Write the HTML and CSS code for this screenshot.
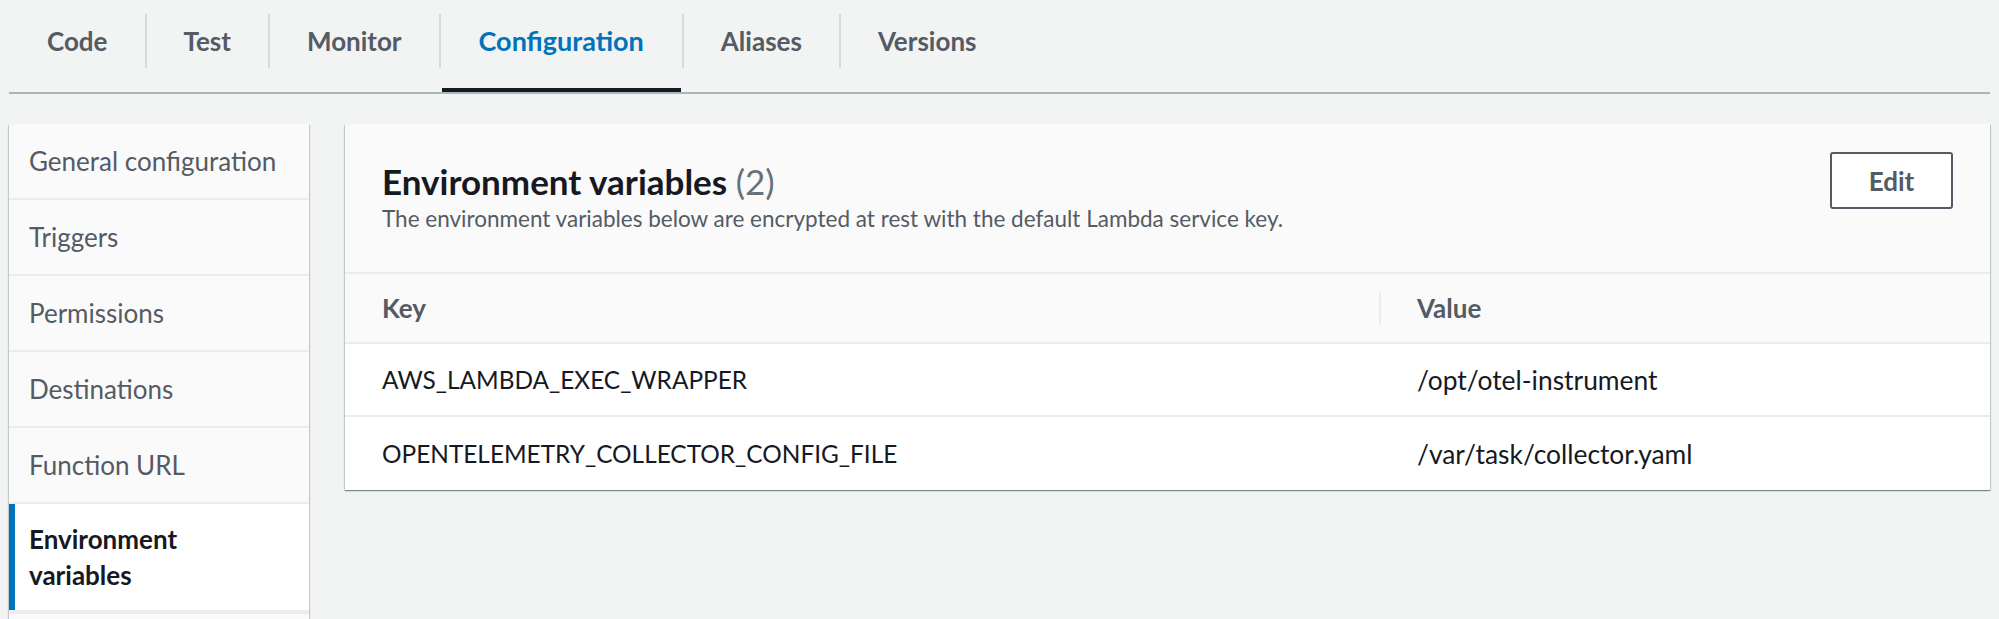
FILE: index.html
```html
<!DOCTYPE html>
<html lang="en">
<head>
<meta charset="utf-8">
<title>Lambda configuration</title>
<link rel="stylesheet" href="styles.css">
</head>
<body>
<div class="page">
  <nav class="tabs">
    <div class="tab first">Code</div>
    <div class="sep"></div>
    <div class="tab">Test</div>
    <div class="sep"></div>
    <div class="tab">Monitor</div>
    <div class="sep"></div>
    <div class="tab active">Configuration</div>
    <div class="sep"></div>
    <div class="tab">Aliases</div>
    <div class="sep"></div>
    <div class="tab">Versions</div>
  </nav>
  <div class="content">
    <aside class="sidenav">
      <div class="nav-item">General configuration</div>
      <div class="nav-item">Triggers</div>
      <div class="nav-item">Permissions</div>
      <div class="nav-item">Destinations</div>
      <div class="nav-item">Function URL</div>
      <div class="nav-item selected">Environment variables</div>
      <div class="nav-item more"></div>
    </aside>
    <section class="panel">
      <header class="panel-header">
        <div class="heading">
          <h2 class="title">Environment variables <span class="count">(2)</span></h2>
          <p class="description">The environment variables below are encrypted at rest with the default Lambda service key.</p>
        </div>
        <button class="btn">Edit</button>
      </header>
      <div class="table">
        <div class="row head">
          <div class="cell key">Key</div>
          <div class="cell value"><span class="divider"></span>Value</div>
        </div>
        <div class="row">
          <div class="cell key">AWS_LAMBDA_EXEC_WRAPPER</div>
          <div class="cell value">/opt/otel-instrument</div>
        </div>
        <div class="row">
          <div class="cell key">OPENTELEMETRY_COLLECTOR_CONFIG_FILE</div>
          <div class="cell value">/var/task/collector.yaml</div>
        </div>
      </div>
    </section>
  </div>
</div>
</body>
</html>
```
FILE: styles.css
```css
* { box-sizing: border-box; }
html, body { margin: 0; padding: 0; }
body {
  background: #f2f3f3;
  font-family: Lato, "Open Sans", sans-serif;
  color: #16191f;
  overflow: hidden;
  height: 619px;
}
.page { padding: 0 9px; }

.tabs {
  display: flex;
  align-items: flex-start;
  height: 94px;
  border-bottom: 2px solid #aab7b8;
}
.tab {
  height: 92px;
  padding: 14px 37px 0;
  line-height: 54px;
  font-size: 26px;
  font-weight: 700;
  color: #545b64;
  white-space: nowrap;
}
.tab.first { padding-left: 38px; }
.tab.active {
  color: #0073bb;
  font-size: 27px;
  border-bottom: 4px solid #16191f;
  margin: 0 1px;
}
.sep {
  width: 2px;
  height: 54px;
  margin-top: 14px;
  background: #d5dbdb;
}

.content {
  display: flex;
  gap: 36px;
  margin-top: 30px;
  align-items: flex-start;
}

.sidenav {
  width: 300px;
  flex: none;
  background: #eaeded;
  box-shadow: 0 1px 1px 0 rgba(0,28,36,.3), 1px 1px 1px 0 rgba(0,28,36,.15), -1px 1px 1px 0 rgba(0,28,36,.15);
  display: flex;
  flex-direction: column;
  gap: 2px;
}
.nav-item {
  background: #fafafa;
  padding: 19px 20px;
  line-height: 36px;
  font-size: 26px;
  color: #545b64;
}
.nav-item.selected {
  background: #fff;
  color: #16191f;
  font-weight: 700;
  border-left: 6px solid #0073bb;
  padding: 17px 60px 17px 14px;
  margin-bottom: 2px;
}
.nav-item.more { height: 60px; }

.panel {
  flex: 1;
  background: #fff;
  box-shadow: 0 1px 1px 0 rgba(0,28,36,.3), 1px 1px 1px 0 rgba(0,28,36,.15), -1px 1px 1px 0 rgba(0,28,36,.15);
}
.panel-header {
  display: flex;
  justify-content: space-between;
  align-items: flex-start;
  background: #fafafa;
  padding: 28px 37px 38px;
  border-bottom: 2px solid #eaeded;
}
.heading { padding-top: 8px; }
.title {
  margin: 0;
  font-size: 35px;
  line-height: 42px;
  font-weight: 700;
  color: #16191f;
}
.count { font-weight: 400; color: #687078; }
.description {
  margin: 2px 0 0;
  font-size: 22.5px;
  line-height: 30px;
  color: #545b64;
}
.btn {
  width: 123px;
  height: 57px;
  background: #fff;
  border: 2px solid #545b64;
  border-radius: 3px;
  font-family: inherit;
  font-size: 26px;
  font-weight: 700;
  color: #545b64;
  padding: 0;
}

.row {
  display: grid;
  grid-template-columns: 1034px 1fr;
  height: 73px;
  align-items: center;
  border-bottom: 2px solid #eaeded;
}
.row:last-child { border-bottom: none; }
.cell.key { padding-left: 37px; font-size: 24.4px; }
.cell.value {
  padding-left: 38px;
  display: flex;
  align-items: center;
  font-size: 26.4px;
}
.row.head {
  height: 70px;
  background: #fafafa;
  font-weight: 700;
  color: #545b64;
}
.row.head .cell { font-size: 26px; }
.divider {
  width: 2px;
  height: 33px;
  background: #eaeded;
  margin-left: -38px;
  margin-right: 36px;
}
```
